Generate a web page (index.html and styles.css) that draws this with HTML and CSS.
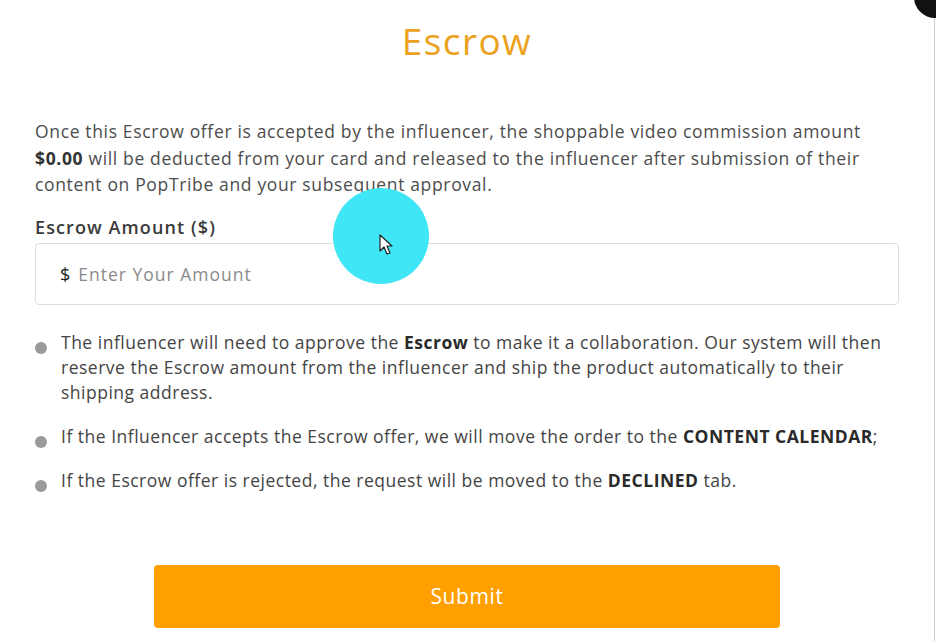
FILE: index.html
```html
<!DOCTYPE html>
<html lang="en">

<head>
    <meta charset="UTF-8">
    <meta name="viewport" content="width=device-width, initial-scale=1.0">
    <title>Escrow</title>
    <link rel="stylesheet" href="styles.css">
</head>

<body>
    <div class="modal">
        <h1 class="modal-title">Escrow</h1>

        <p class="intro">
            Once this Escrow offer is accepted by the influencer, the shoppable video commission amount<br>
            <b>$0.00</b> will be deducted from your card and released to the influencer after submission of their<br>
            content on PopTribe and your subsequent approval.
        </p>

        <label class="field-label" for="amount">Escrow Amount ($)</label>
        <div class="amount-box">
            <span class="currency">$</span>
            <input id="amount" type="text" placeholder="Enter Your Amount">
        </div>

        <ul class="notes">
            <li>The influencer will need to approve the <b>Escrow</b> to make it a collaboration. Our system will then<br>
                reserve the Escrow amount from the influencer and ship the product automatically to their<br>
                shipping address.</li>
            <li>If the Influencer accepts the Escrow offer, we will move the order to the <b>CONTENT CALENDAR</b>;</li>
            <li>If the Escrow offer is rejected, the request will be moved to the <b>DECLINED</b> tab.</li>
        </ul>

        <div class="actions">
            <button class="submit-button">Submit</button>
        </div>

        <!-- close button, mostly off screen -->
        <span class="close-button"></span>
        <span class="scroll-edge"></span>

        <!-- screen recorder cursor highlight -->
        <div class="cursor-spot">
            <svg class="cursor" width="16" height="22" viewBox="0 0 16 22">
                <path d="M1 1 L1 17 L5 13 L8 20 L11 19 L8 12 L13 12 Z" fill="#fff" stroke="#222" stroke-width="1.2" stroke-linejoin="round"/>
            </svg>
        </div>
    </div>
</body>

</html>
```

FILE: styles.css
```css
body {
    margin: 0;
    background-color: #fff;
    font-family: "Open Sans", "Liberation Sans", sans-serif;
    color: #4a4a4a;
}

.modal {
    position: relative;
    width: 936px;
    height: 641px;
    overflow: hidden;
    box-sizing: border-box;
    padding: 16px 37px 0 35px;
}

.modal-title {
    margin: 0;
    text-align: center;
    font-size: 37px;
    font-weight: 500;
    letter-spacing: 1.4px;
    color: #eba21f;
    line-height: 50px;
}

.intro {
    margin: 52px 0 0 0;
    font-size: 17.5px;
    line-height: 26.5px;
    letter-spacing: 0.65px;
    white-space: nowrap;
    color: #4d4d4d;
}

.intro b {
    color: #333;
}

.field-label {
    display: block;
    margin-top: 16px;
    font-size: 18px;
    font-weight: 600;
    line-height: 26px;
    letter-spacing: 1.1px;
    color: #3a3a3a;
}

.amount-box {
    display: flex;
    align-items: center;
    height: 62px;
    margin-top: 3px;
    padding: 0 24px;
    border: 1px solid #dedede;
    border-radius: 4px;
    box-sizing: border-box;
}

.currency {
    font-size: 18px;
    color: #222;
    margin-right: 8px;
}

.amount-box input {
    flex: 1;
    border: none;
    outline: none;
    font-family: inherit;
    font-size: 17.5px;
    letter-spacing: 1px;
    color: #333;
    padding: 0;
}

.amount-box input::placeholder {
    color: #8a8a8a;
}

.notes {
    list-style: none;
    margin: 25px 0 0 0;
    padding: 0;
}

.notes li {
    position: relative;
    padding-left: 26px;
    margin-bottom: 19px;
    font-size: 17.5px;
    line-height: 25px;
    letter-spacing: 0.5px;
    white-space: nowrap;
    color: #444;
}

.notes li::before {
    content: "";
    position: absolute;
    left: 0;
    top: 12px;
    width: 12px;
    height: 12px;
    border-radius: 50%;
    background-color: #9a9a9a;
}

.notes b {
    color: #2a2a2a;
}

.actions {
    display: flex;
    justify-content: center;
    margin-top: 72px;
}

.submit-button {
    width: 626px;
    height: 63px;
    border: none;
    border-radius: 4px;
    background-color: #ff9f00;
    color: #fff;
    font-family: inherit;
    font-size: 21px;
    font-weight: 500;
    letter-spacing: 0.6px;
}

.close-button {
    position: absolute;
    top: -24px;
    right: -20px;
    width: 42px;
    height: 42px;
    border-radius: 50%;
    background-color: #111;
}

.scroll-edge {
    position: absolute;
    top: 18px;
    right: 1px;
    width: 1px;
    height: 623px;
    background-color: #cfcfcf;
}

.cursor-spot {
    position: absolute;
    left: 333px;
    top: 188px;
    width: 96px;
    height: 96px;
    border-radius: 50%;
    background-color: #3fe6f5;
}

.cursor {
    position: absolute;
    left: 46px;
    top: 46px;
}
```
